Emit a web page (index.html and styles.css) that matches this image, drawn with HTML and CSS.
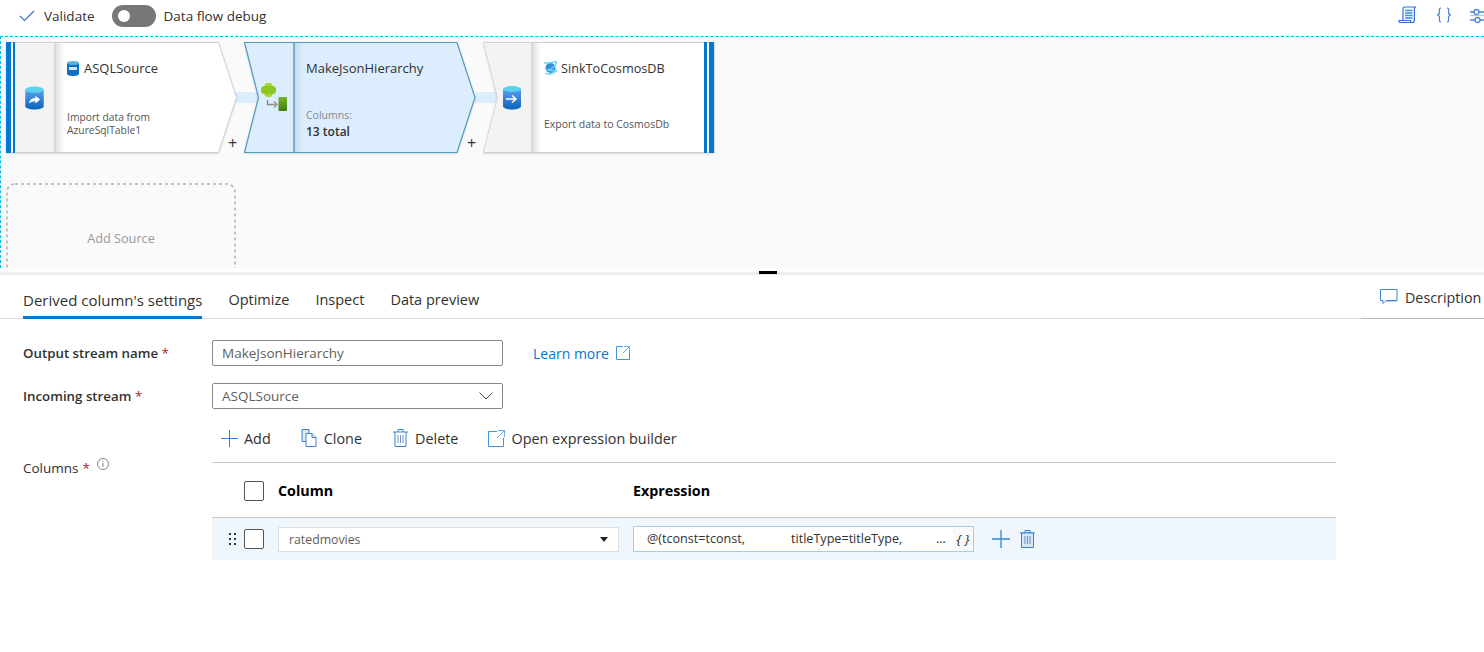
FILE: index.html
```html
<!DOCTYPE html>
<html lang="en">
<head>
    <meta charset="utf-8"/>
    <title>Data flow</title>
    <link rel="stylesheet" href="styles.css">
</head>
<body>
    <div class="topbar">
        <div class="topbar-left">
            <svg class="check-icon" width="16" height="12" viewBox="0 0 16 12"><path d="M1 6l4.5 4.5L15 1" fill="none" stroke="#3f6fc4" stroke-width="1.2"/></svg>
            <span class="validate">Validate</span>
            <span class="toggle"><span class="knob"></span></span>
            <span>Data flow debug</span>
        </div>
        <div class="topbar-right">
            <svg width="20" height="20" viewBox="0 0 20 20" fill="none" stroke="#2f6fd0" stroke-width="1.2"><path d="M5 15.500V3.500C5 2.500 5.600 2 6.500 2H18c-1 0-1.600.6-1.600 1.600V15c0 1.500-.8 2.500-2 2.500H2.500C1.500 17.500 1 17 1 16.200V15.500h11.500v.8c0 .7.700 1.200 1.400 1.200"/><path d="M7 5.500h7.500M7 8h7.500M7 10.500h7.500M7 13h7.500" stroke="#3b8fe0" stroke-width="1.500"/></svg>
            <svg width="18" height="20" viewBox="0 0 18 20" fill="none" stroke="#4b7fd8" stroke-width="1.200"><path d="M6 3C4 3 4.500 4.500 4.500 7c0 2-.5 3-2.500 3 2 0 2.500 1 2.500 3 0 2.500-.5 4 1.500 4M12 3c2 0 1.500 1.500 1.500 4 0 2 .5 3 2.500 3-2 0-2.500 1-2.500 3 0 2.500.5 4-1.500 4"/></svg>
            <svg class="sliders" width="14" height="20" viewBox="0 0 14 20" fill="none" stroke="#4b87d8" stroke-width="1.300"><path d="M0 7h4M9 7h5M0 15h5M10 15h4"/><circle cx="6.500" cy="7" r="2.500"/><circle cx="7.500" cy="15" r="2.500"/><path d="M0 10.500h14" stroke="#a9c6ec"/></svg>
        </div>
    </div>

    <div class="canvas">
        <div class="link link-one"></div>
        <div class="link link-two"></div>

        <div class="node node-source">
            <svg class="shape" width="232" height="112" viewBox="0 0 232 112">
                <defs>
                    <linearGradient id="edge"><stop offset="0" stop-color="#e2e2e2"/><stop offset="1" stop-color="#e2e2e2" stop-opacity="0"/></linearGradient>
                    <linearGradient id="edge-blue"><stop offset="0" stop-color="#c4dcee"/><stop offset="1" stop-color="#c4dcee" stop-opacity="0"/></linearGradient>
                    <linearGradient id="cap" x1="0" y1="0" x2="0" y2="1"><stop offset="0" stop-color="#5ea0ef"/><stop offset="1" stop-color="#0a62b8"/></linearGradient>
                    <linearGradient id="bar" x1="0" y1="0" x2="0" y2="1"><stop offset="0" stop-color="#76b82a"/><stop offset="1" stop-color="#3a7a12"/></linearGradient>
                </defs>
                <path d="M.5 .5H212.500L230.500 55.500L212.500 110.500H.5Z" fill="#fff" stroke="#d0d0d0"/>
                <rect x="9" y="1" width="40" height="109" fill="#f3f3f3"/>
                <rect x="48" y="1" width="2" height="109" fill="#d9d9d9"/>
                <rect x="50" y="1" width="8" height="109" fill="url(#edge)"/>
                <rect x="0" y="0" width="5" height="111" fill="#0078d4"/>
                <rect x="7" y="0" width="2" height="111" fill="#0078d4"/>
            </svg>
            <svg class="side-icon" width="19" height="24" viewBox="0 0 20 26">
                <path d="M0 4v18c0 2 4.500 3.500 10 3.500s10-1.500 10-3.500V4z" fill="url(#cap)"/>
                <ellipse cx="10" cy="4" rx="10" ry="3.500" fill="#59d0ee"/>
                <path d="M4 19c.5-4 3-6 7-6v-2.500l5 4.200-5 4.200v-2.500c-3 0-5 .8-7 2.600z" fill="#fff"/>
            </svg>
            <div class="node-body">
                <div class="node-title">
                    <svg width="12" height="15" viewBox="0 0 12 15"><path d="M0 2v11c0 1 2.700 2 6 2s6-1 6-2V2z" fill="#0b6fc4"/><ellipse cx="6" cy="2" rx="6" ry="2" fill="#59b4d9"/><rect x="2" y="6" width="8" height="3" fill="#cfe6f7"/></svg>
                    <span>ASQLSource</span>
                </div>
                <div class="node-desc">Import data from<br>AzureSqlTable1</div>
            </div>
            <span class="node-plus">+</span>
        </div>

        <div class="node node-derive">
            <svg class="shape" width="232" height="112" viewBox="0 0 232 112">
                <path d="M.5 .5H213L231 55.500L213 110.500H.5L14.500 55.500Z" fill="#dcedfd" stroke="#4f9bb8" stroke-width="1.200"/>
                <rect x="49" y="1" width="2" height="109" fill="#7db0c6"/>
                <rect x="51" y="1" width="8" height="109" fill="url(#edge-blue)"/>
            </svg>
            <svg class="side-icon derive-icon" width="26" height="28" viewBox="0 0 26 28">
                <rect x="3.500" y="0" width="8" height="14" rx="3" fill="#a4d62c"/>
                <rect x="0" y="3" width="15" height="8" rx="3.500" fill="#8cc820"/>
                <path d="M6.500 17v4.500h8" fill="none" stroke="#8a8a8a" stroke-width="1.400"/>
                <path d="M13 18.500l3 3-3 3" fill="none" stroke="#8a8a8a" stroke-width="1.200"/>
                <rect x="17.500" y="14" width="8.500" height="14" rx="1" fill="url(#bar)"/>
            </svg>
            <div class="node-body">
                <div class="node-title"><span>MakeJsonHierarchy</span></div>
                <div class="node-columns">
                    <div class="columns-label">Columns:</div>
                    <div class="columns-total">13 total</div>
                </div>
            </div>
            <span class="node-plus">+</span>
        </div>

        <div class="node node-sink">
            <svg class="shape" width="232" height="112" viewBox="0 0 232 112">
                <path d="M.5 .5H231V110.500H.5L14.500 55.500Z" fill="#fff" stroke="#d0d0d0"/>
                <path d="M1 1H48V110H1L15 55.500Z" fill="#f3f3f3"/>
                <rect x="48" y="1" width="2" height="109" fill="#d9d9d9"/>
                <rect x="50" y="1" width="8" height="109" fill="url(#edge)"/>
                <rect x="221" y="0" width="3" height="111" fill="#0078d4"/>
                <rect x="226" y="0" width="5" height="111" fill="#0078d4"/>
            </svg>
            <svg class="side-icon sink-icon" width="18" height="24" viewBox="0 0 18 24">
                <path d="M0 3v17c0 2 4 3.500 9 3.500s9-1.500 9-3.500V3z" fill="url(#cap)"/>
                <ellipse cx="9" cy="3" rx="9" ry="3" fill="#59d0ee"/>
                <path d="M3 13h9M9 9.500l4 3.500-4 3.500" fill="none" stroke="#fff" stroke-width="1.500"/>
            </svg>
            <div class="node-body">
                <div class="node-title">
                    <svg width="13" height="14" viewBox="0 0 13 14"><circle cx="6.500" cy="7" r="5" fill="#2f8fd8"/><path d="M0 2c4 0 8 .5 13-2-1 4-4 8-9 9 3 1 6 1 9 0-3 4-9 5-12 3" fill="none" stroke="#6fd6f2" stroke-width="1.500"/></svg>
                    <span>SinkToCosmosDB</span>
                </div>
                <div class="node-desc node-desc-one">Export data to CosmosDb</div>
            </div>
        </div>

        <div class="add-source">
            <svg class="add-source-frame" width="230" height="110" viewBox="0 0 230 110"><rect x="1" y="1" width="228" height="108" rx="8" fill="none" stroke="#b4b4b4" stroke-width="1.600" stroke-dasharray="3 3"/></svg>
            Add Source
        </div>
    </div>

    <div class="splitter"><span class="splitter-handle"></span></div>

    <div class="tabs">
        <div class="tab-list">
            <span class="tab tab-active">Derived column's settings</span>
            <span class="tab">Optimize</span>
            <span class="tab">Inspect</span>
            <span class="tab">Data preview</span>
        </div>
        <div class="tab-side">
            <svg width="18" height="16" viewBox="0 0 18 16" fill="none"><path d="M.5 .5h16.500v11H6l-3 3v-3H.5z" stroke="#3f83d8"/><path d="M3 12.500h14" stroke="#b9c9e6"/></svg>
            <span>Description</span>
        </div>
    </div>

    <div class="form">
        <label class="form-label">Output stream name <em>*</em></label>
        <div class="form-line">
            <div class="field">MakeJsonHierarchy</div>
            <a class="learn-more">Learn more
                <svg width="14" height="14" viewBox="0 0 14 14" fill="none" stroke="#3f97e0"><path d="M7 .5H.5v13h13V6"/><path d="M8 .5h5.500V6M13.500 .5L7 7" stroke-width=".8"/></svg>
            </a>
        </div>

        <label class="form-label">Incoming stream <em>*</em></label>
        <div class="form-line">
            <div class="field">
                ASQLSource
                <svg width="14" height="8" viewBox="0 0 14 8" fill="none" stroke="#444"><path d="M.5 .5L7 7l6.500-6.500"/></svg>
            </div>
        </div>

        <label class="form-label form-label-columns">Columns <em>*</em>
            <svg width="12" height="12" viewBox="0 0 12 12" fill="none" stroke="#666" stroke-width=".8"><circle cx="6" cy="6" r="5.500"/><path d="M6 5v4M6 3v1"/></svg>
        </label>
        <div class="columns">
            <div class="toolbar">
                <span class="tool">
                    <svg width="17" height="17" viewBox="0 0 17 17" stroke="#2f7fd0"><path d="M8.500 0v17M0 8.500h17"/></svg>
                    Add
                </span>
                <span class="tool">
                    <svg width="17" height="18" viewBox="0 0 17 18" fill="#dbe9fb" stroke="#3f7fd8"><path d="M1 .5h7v12H1z"/><path d="M5 4.500h6l4 4v9H5z" fill="#fff"/><path d="M11 4.500v4h4"/></svg>
                    Clone
                </span>
                <span class="tool">
                    <svg width="17" height="18" viewBox="0 0 15 18" fill="none" stroke="#2f86d8"><path d="M0 3h15M5 3V.5h5V3M2 3v14.500h11V3"/><path d="M5 6v8M7.500 6v8M10 6v8" stroke="#7d8fc0"/></svg>
                    Delete
                </span>
                <span class="tool">
                    <svg width="17" height="17" viewBox="0 0 17 17" fill="none" stroke="#3f97e0"><path d="M9 1.500H.5v15h15V8"/><path d="M10 .5h6.500V7M16.500 .5L9 8" stroke-width=".8"/></svg>
                    Open expression builder
                </span>
            </div>

            <div class="table-head">
                <span class="checkbox"></span>
                <span class="col-head col-head-column">Column</span>
                <span class="col-head">Expression</span>
            </div>

            <div class="table-row">
                <span class="grip">
                    <i></i><i></i><i></i><i></i><i></i><i></i>
                </span>
                <span class="checkbox"></span>
                <div class="cell-select">
                    ratedmovies
                    <span class="caret"></span>
                </div>
                <div class="cell-expr">
                    <span class="expr-text">@(tconst=tconst,</span>
                    <span class="expr-text expr-second">titleType=titleType,</span>
                    <span class="expr-text expr-dots">...</span>
                    <span class="expr-braces">{ }</span>
                </div>
                <svg class="row-add" width="18" height="18" viewBox="0 0 18 18" stroke="#2b88d8" stroke-width="1.300"><path d="M9 0v18M0 9h18"/></svg>
                <svg class="row-trash" width="15" height="18" viewBox="0 0 15 18" fill="#d5e7f8" stroke="#2f86d8"><path d="M0 3h15M5 3V.5h5V3" fill="none"/><path d="M1.500 3v14.500h12V3z"/><path d="M5 6v8M7.500 6v8M10 6v8" stroke="#6b8fb8"/></svg>
            </div>
        </div>
    </div>
</body>
</html>
```

FILE: styles.css
```css
* {
    box-sizing: border-box;
}

body {
    margin: 0;
    font-family: "Open Sans", "Noto Sans", sans-serif;
    font-size: 13px;
    color: #323130;
    background: #fff;
    overflow: hidden;
}

svg {
    display: block;
    flex: none;
}

/* top command bar */
.topbar {
    height: 36px;
    display: flex;
    justify-content: space-between;
    align-items: center;
    padding-left: 19px;
}
.topbar-left {
    display: flex;
    align-items: center;
    font-size: 13.5px;
    margin-top: -4px;
}
.validate {
    margin-left: 9px;
}
.toggle {
    width: 44px;
    height: 22px;
    margin: 0 8px 0 17px;
    border-radius: 11px;
    background: #777;
    padding: 5px 6px;
}
.knob {
    display: block;
    width: 12px;
    height: 12px;
    border-radius: 50%;
    background: #fff;
}
.topbar-right {
    display: flex;
    align-items: center;
    gap: 17px;
    margin-top: -6px;
}

/* pipeline canvas */
.canvas {
    position: relative;
    height: 232px;
    background: #fafafa;
    border-top: 1px dashed #00bcf2;
    border-left: 1px dashed #00bcf2;
    overflow: hidden;
}
.node {
    position: absolute;
    top: 5px;
    width: 232px;
    height: 112px;
}
.node-source { left: 5px; }
.node-derive { left: 243px; }
.node-sink { left: 482px; }
.shape {
    position: absolute;
    left: 0;
    top: 0;
    filter: drop-shadow(0 1px 1px rgba(0, 0, 0, .12));
}
.side-icon {
    position: absolute;
    left: 19px;
    top: 44px;
}
.derive-icon {
    left: 17px;
    top: 41px;
}
.sink-icon {
    left: 20px;
    top: 44px;
}
.node-body {
    position: absolute;
    left: 61px;
    top: 0;
    right: 24px;
    bottom: 0;
}
.node-title {
    position: absolute;
    top: 17px;
    left: 0;
    display: flex;
    align-items: center;
    gap: 5px;
    font-size: 13px;
    font-weight: 500;
    white-space: nowrap;
}
.node-derive .node-title {
    left: 1px;
}
.node-sink .node-title {
    gap: 4px;
    font-size: 12.7px;
}
.node-desc {
    position: absolute;
    top: 69px;
    left: 0;
    font-size: 10.3px;
    line-height: 13px;
    color: #555;
    white-space: nowrap;
}
.node-desc-one {
    top: 76px;
    font-size: 10.5px;
}
.node-columns {
    position: absolute;
    top: 66px;
    left: 1px;
}
.columns-label {
    font-size: 10.5px;
    line-height: 15px;
    color: #888;
}
.columns-total {
    font-size: 12px;
    font-weight: 600;
    line-height: 17px;
}
.node-plus {
    position: absolute;
    left: 222px;
    top: 91px;
    font-size: 16px;
    line-height: 20px;
    color: #333;
}
.node-derive .node-plus {
    left: 223px;
}
.link {
    position: absolute;
    top: 55px;
    height: 11px;
    background: #dcedfd;
}
.link-one {
    left: 235px;
    width: 22px;
}
.link-two {
    left: 474px;
    width: 22px;
}
.add-source {
    position: absolute;
    left: 5px;
    top: 146px;
    width: 230px;
    height: 110px;
    display: flex;
    align-items: center;
    justify-content: center;
    font-size: 12.7px;
    color: #999;
}
.add-source-frame {
    position: absolute;
    left: 0;
    top: 0;
}

/* drag bar */
.splitter {
    position: relative;
    height: 8px;
    padding-top: 4px;
}
.splitter::before {
    content: "";
    display: block;
    height: 3px;
    background: #eee;
}
.splitter-handle {
    position: absolute;
    left: 759px;
    top: 3px;
    width: 18px;
    height: 3px;
    background: #000;
}

/* tabs */
.tabs {
    height: 43px;
    display: flex;
    justify-content: space-between;
    padding-left: 23px;
    border-bottom: 1px solid #ddd;
}
.tab-list {
    display: flex;
    gap: 26px;
}
.tab {
    height: 43px;
    padding-top: 14px;
    font-size: 14.5px;
    line-height: 20px;
}
.tab-active {
    border-bottom: 3px solid #0078d4;
    font-size: 15px;
    font-weight: 500;
}
.tab-side {
    width: 123px;
    display: flex;
    align-items: center;
    gap: 7px;
    padding: 0 0 0 19px;
    margin-bottom: -1px;
    border-bottom: 1px solid #bbb;
    font-size: 14.3px;
    white-space: nowrap;
}

/* form */
.form {
    display: grid;
    grid-template-columns: 189px 1124px;
    padding: 21px 0 0 23px;
}
.form-label {
    font-size: 13.3px;
    font-weight: 600;
    line-height: 27px;
}
.form-label em {
    color: #a4262c;
    font-style: normal;
    font-weight: 400;
}
.form-label-columns {
    display: flex;
    align-items: flex-start;
    gap: 4px;
    padding-top: 29px;
    font-size: 13.5px;
    font-weight: 400;
}
.form-label-columns svg {
    margin: 3px 0 0 3px;
}
.form-line {
    display: flex;
    align-items: center;
    margin-bottom: 17px;
}
.field {
    width: 291px;
    height: 26px;
    padding: 0 9px;
    display: flex;
    align-items: center;
    justify-content: space-between;
    border: 1px solid #8a8886;
    border-radius: 2px;
    font-size: 13.5px;
    color: #605e5c;
}
.learn-more {
    display: flex;
    align-items: center;
    gap: 7px;
    margin-left: 30px;
    font-size: 14px;
    color: #0078d4;
}

/* columns table */
.toolbar {
    display: flex;
    align-items: center;
    height: 26px;
    margin-top: -1px;
    padding-left: 9px;
    gap: 30px;
}
.tool {
    display: flex;
    align-items: center;
    gap: 6px;
    font-size: 14.4px;
}
.table-head {
    display: flex;
    align-items: center;
    height: 56px;
    margin-top: 11px;
    padding: 1px 0 0 32px;
    border-top: 1px solid #c8c8c8;
    border-bottom: 1px solid #c8c8c8;
}
.checkbox {
    display: block;
    flex: none;
    width: 20px;
    height: 20px;
    border: 1px solid #555;
    border-radius: 2px;
    background: #fff;
}
.col-head {
    font-size: 14.3px;
    font-weight: 700;
    color: #000;
}
.col-head-column {
    width: 355px;
    margin-left: 14px;
}
.table-row {
    display: flex;
    align-items: center;
    height: 42px;
    padding-left: 17px;
    background: #eff6fc;
}
.grip {
    display: grid;
    grid-template-columns: 2px 2px;
    gap: 3px 3px;
    margin-right: 8px;
}
.grip i {
    width: 2px;
    height: 2px;
    background: #333;
}
.cell-select {
    position: relative;
    width: 341px;
    height: 25px;
    margin-left: 14px;
    padding-left: 10px;
    border: 1px solid #ddd;
    background: #fff;
    font-size: 12.3px;
    line-height: 23px;
    color: #605e5c;
}
.caret {
    position: absolute;
    right: 10px;
    top: 9px;
    border: 4px solid transparent;
    border-top: 5px solid #222;
}
.cell-expr {
    position: relative;
    width: 341px;
    height: 26px;
    margin-left: 14px;
    border: 1px solid #a6cdee;
    background: #fff;
    font-size: 12.6px;
    line-height: 24px;
}
.expr-text {
    position: absolute;
    left: 13px;
    top: 0;
    white-space: nowrap;
}
.expr-second { left: 157px; }
.expr-dots { left: 302px; }
.expr-braces {
    position: absolute;
    right: 0;
    top: 0;
    width: 20px;
    text-align: center;
    font-style: italic;
    font-size: 13.5px;
    background: #f8f9fb;
}
.row-add {
    margin-left: 18px;
}
.row-trash {
    margin-left: 10px;
}
```
